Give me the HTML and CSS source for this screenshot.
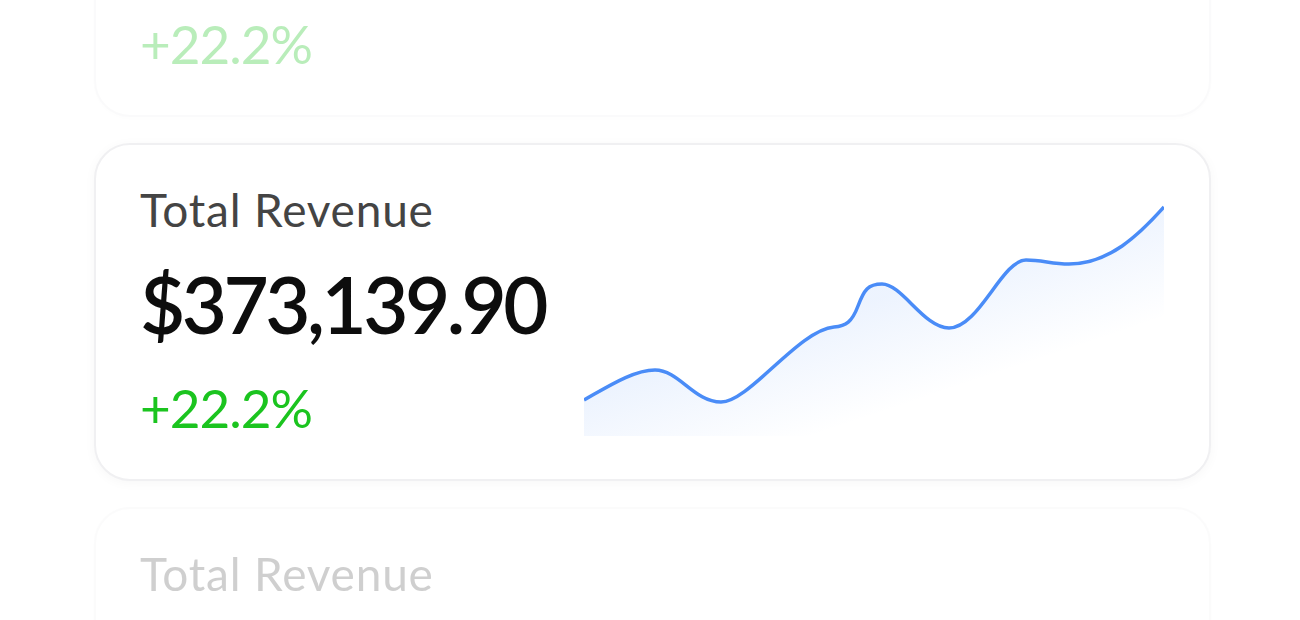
FILE: index.html
```html
<!DOCTYPE html>
<html lang="en">
<head>
    <meta charset="UTF-8">
    <meta name="viewport" content="width=device-width, initial-scale=1.0">
    <title>Revenue Cards</title>
    <link rel="stylesheet" href="styles.css">
</head>
<body>
    <div class="viewport">
        <div class="stack">
            <!-- карточка сверху, уходит за край -->
            <div class="card faded">
                <div class="card-info upper-info">
                    <div class="change">+22.2%</div>
                </div>
            </div>

            <!-- активная карточка -->
            <div class="card">
                <div class="card-info">
                    <div class="label">Total Revenue</div>
                    <div class="amount">$373,139.90</div>
                    <div class="change">+22.2%</div>
                </div>
                <svg class="chart" width="580" height="240" viewBox="0 0 580 240">
                    <defs>
                        <linearGradient id="area-fill" gradientUnits="userSpaceOnUse" x1="290" y1="100" x2="325" y2="204">
                            <stop offset="0" stop-color="#4a8cf7" stop-opacity="0.1"/>
                            <stop offset="1" stop-color="#4a8cf7" stop-opacity="0"/>
                        </linearGradient>
                    </defs>
                    <path fill="url(#area-fill)" d="M0,200 C25,186 50,170 71,170 C95,170 110,202 137,202 C165,202 215,130 250,127 C262,126 268,122 274,106 C280,90 284,84 298,84 C318,84 340,128 365,128 C395,128 418,60 442,60 C458,60 468,64 485,64 C525,64 555,35 580,7 L580,236 L0,236 Z"/>
                    <path fill="none" stroke="#4a8cf7" stroke-width="3.5" d="M0,200 C25,186 50,170 71,170 C95,170 110,202 137,202 C165,202 215,130 250,127 C262,126 268,122 274,106 C280,90 284,84 298,84 C318,84 340,128 365,128 C395,128 418,60 442,60 C458,60 468,64 485,64 C525,64 555,35 580,7"/>
                </svg>
            </div>

            <!-- карточка снизу -->
            <div class="card faded lower">
                <div class="card-info">
                    <div class="label">Total Revenue</div>
                </div>
            </div>
        </div>
    </div>
</body>
</html>
```

FILE: styles.css
```css
body {
    margin: 0;
    background-color: #fff;
    font-family: Lato, "Liberation Sans", sans-serif;
}

.viewport {
    height: 620px;
    overflow: hidden;
}

.stack {
    display: flex;
    flex-direction: column;
    gap: 26px;
    margin-top: -221px;
    padding: 0 89px 0 94px;
}

.card {
    box-sizing: border-box;
    height: 338px;
    flex-shrink: 0;
    display: flex;
    padding: 0 45px 0 44px;
    background: #fff;
    border: 2px solid #f0f0f2;
    border-radius: 36px;
    box-shadow: 0 2px 12px rgba(0, 0, 0, 0.035);
}

.card-info {
    padding-top: 42px;
}

.upper-info {
    padding-top: 236px;
}

.label {
    font-size: 46px;
    line-height: 46px;
    letter-spacing: 0.8px;
    color: #444;
}

.amount {
    margin-top: 32px;
    font-size: 78px;
    line-height: 78px;
    font-weight: 600;
    letter-spacing: -3.5px;
    color: #0d0d0d;
}

.change {
    margin-top: 38px;
    font-size: 53px;
    line-height: 53px;
    letter-spacing: -1px;
    color: #1bc41f;
}

.upper-info .change {
    margin-top: 0;
}

.chart {
    margin-left: auto;
    margin-top: 55px;
}

/* соседние карточки почти прозрачные */
.faded {
    opacity: 0.3;
    filter: blur(0.6px);
}

.lower {
    opacity: 0.25;
}
```
